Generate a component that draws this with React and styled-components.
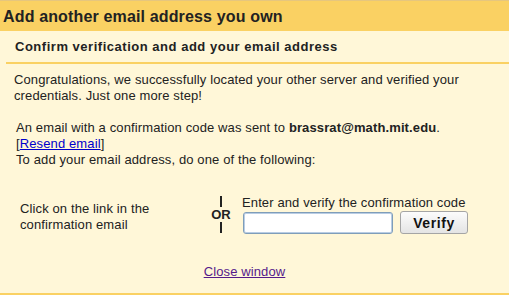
import React from 'react';
import styled, { createGlobalStyle } from 'styled-components';

const GlobalStyle = createGlobalStyle`
  html, body {
    margin: 0;
    padding: 0;
    background: #fff7d8;
  }
  body {
    font-family: "Liberation Sans", Arial, sans-serif;
    font-size: 13px;
    letter-spacing: 0.12px;
    color: #222;
  }
`;

const Frame = styled.div`
  height: 295px;
  box-sizing: border-box;
  border-top: 1px solid #e6c67e;
  border-bottom: 2px solid #fad163;
  background: #fff7d8;
  display: flex;
  flex-direction: column;
`;

const Header = styled.h1`
  margin: 0;
  height: 30px;
  line-height: 32px;
  padding-left: 3px;
  background: #fad163;
  font-size: 16px;
  font-weight: bold;
  letter-spacing: 0.15px;
  color: #222;
`;

const SubHeader = styled.h2`
  margin: 0 0 0 6px;
  padding: 8px 0 8px 9px;
  line-height: 15px;
  font-size: 13px;
  font-weight: bold;
  letter-spacing: 0.52px;
  color: #222;
  border-bottom: 2px solid #fad163;
`;

const Body = styled.div`
  padding: 8px 14px 0;
`;

const Para = styled.p`
  margin: 0 0 ${p => p.gap || 0}px ${p => p.indent || 0}px;
  line-height: 16px;
`;

const Link = styled.a`
  color: ${p => (p.visited ? '#551a8b' : '#0000cc')};
  text-decoration: underline;
  cursor: pointer;
`;

const Choices = styled.div`
  display: grid;
  grid-template-columns: 183px 36px auto;
  align-items: center;
  margin: 27px 0 0 6px;
`;

const Option = styled.div`
  line-height: 16px;
  padding-top: 4px;
`;

const Or = styled.div`
  display: flex;
  flex-direction: column;
  align-items: center;
  font-weight: bold;
  font-size: 13px;
  line-height: 15px;
`;

const Bar = styled.span`
  width: 2px;
  height: 11px;
  background: #222;
`;

const Verify = styled.div`
  display: flex;
  flex-direction: column;
  padding-left: 3px;
`;

const Label = styled.div`
  line-height: 15px;
`;

const Row = styled.div`
  display: flex;
  align-items: center;
  gap: 7px;
  margin-top: 1px;
`;

const Input = styled.input`
  width: 144px;
  height: 18px;
  margin: 0 0 0 1px;
  padding: 1px 2px;
  border: 1px solid #7f9db9;
  border-radius: 3px;
  background: #fff;
  font: inherit;
  outline: none;
  box-shadow: inset 0 0 0 1px #b9cde4;
`;

const Button = styled.button`
  width: 68px;
  height: 23px;
  padding: 0;
  border: 1px solid #a5a5a5;
  border-radius: 3px;
  background: linear-gradient(#fcfcfc, #e4e4e4);
  font-family: "Liberation Sans", Arial, sans-serif;
  font-size: 14px;
  font-weight: bold;
  letter-spacing: 0.6px;
  color: #111;
`;

const Footer = styled.div`
  text-align: center;
  margin: 30px 0 0;
  padding-right: 20px;
  line-height: 16px;
`;

export default function App() {
  return (
    <>
      <GlobalStyle />
      <Frame>
        <Header>Add another email address you own</Header>
        <SubHeader>Confirm verification and add your email address</SubHeader>
        <Body>
          <Para gap={16}>
            Congratulations, we successfully located your other server and verified your credentials. Just one more step!
          </Para>
          <Para indent={2}>
            An email with a confirmation code was sent to <b>brassrat@math.mit.edu</b>.
            <br />[<Link>Resend email</Link>]
            <br />To add your email address, do one of the following:
          </Para>
          <Choices>
            <Option>
              Click on the link in the
              <br />confirmation email
            </Option>
            <Or>
              <Bar />
              OR
              <Bar />
            </Or>
            <Verify>
              <Label>Enter and verify the confirmation code</Label>
              <Row>
                <Input type="text" />
                <Button>Verify</Button>
              </Row>
            </Verify>
          </Choices>
          <Footer>
            <Link visited>Close window</Link>
          </Footer>
        </Body>
      </Frame>
    </>
  );
}
